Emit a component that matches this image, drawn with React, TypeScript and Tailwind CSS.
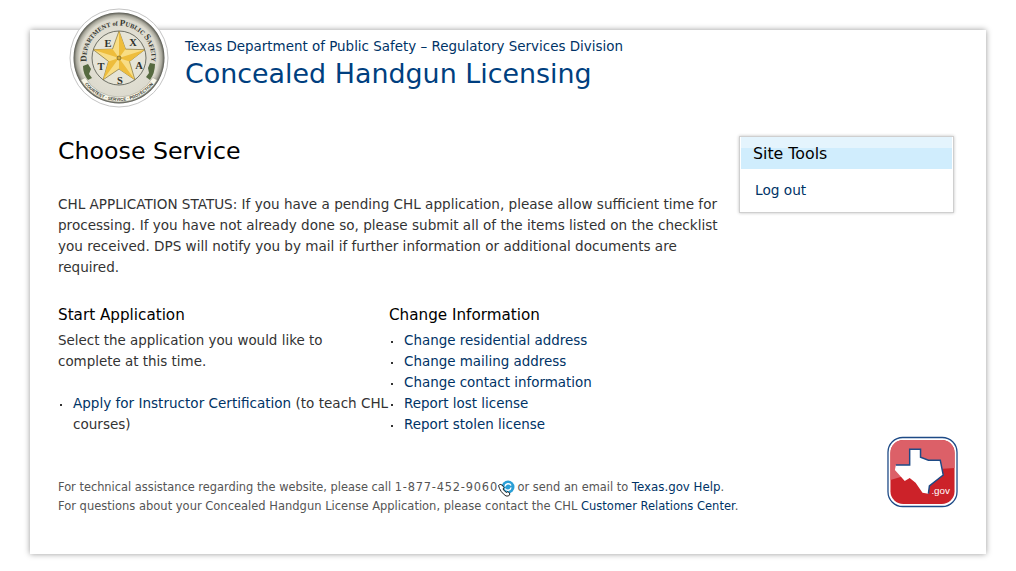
import React from 'react';

const Seal = () => (
  <svg width="100" height="100" viewBox="0 0 100 100" className="absolute left-[39px] top-[-22px]">
    <defs>
      <radialGradient id="rim" cx="50%" cy="50%" r="50%">
        <stop offset="0%" stopColor="#e9e7da" />
        <stop offset="86%" stopColor="#dcdace" />
        <stop offset="94%" stopColor="#a9a89c" />
        <stop offset="100%" stopColor="#55564e" />
      </radialGradient>
    </defs>
    <circle cx="50" cy="50" r="49" fill="#ffffff" stroke="#c4c4c4" strokeWidth="1" />
    <circle cx="50" cy="50" r="45.5" fill="url(#rim)" />
    <circle cx="50" cy="50" r="27" fill="#e6e4d6" stroke="#4f5249" strokeWidth="0.8" />
    <path id="sealTop" d="M18.6 58.4 A32.5 32.5 0 1 1 81.4 58.4" fill="none" />
    <text fontFamily="'Liberation Serif', serif" fontWeight="700" fill="#34362f">
      <textPath href="#sealTop" startOffset="50%" textAnchor="middle">
        <tspan fontSize="9">D</tspan><tspan fontSize="6.4">EPARTMENT</tspan><tspan fontSize="6.4"> of </tspan><tspan fontSize="9">P</tspan><tspan fontSize="6.4">UBLIC </tspan><tspan fontSize="9">S</tspan><tspan fontSize="6.4">AFETY</tspan>
      </textPath>
    </text>
    <path d="M16.2 69.5 A39 39 0 0 0 83.8 69.5 L88.1 72 A44 44 0 0 1 11.9 72 Z" fill="#f8f6e8" stroke="#8e8e82" strokeWidth="0.4" />
    <path id="sealBot" d="M12.8 71.5 A43 43 0 0 0 87.2 71.5" fill="none" />
    <text fontFamily="'Liberation Sans', sans-serif" fontSize="4.3" fontWeight="700" fill="#3a3c34">
      <textPath href="#sealBot" startOffset="50%" textAnchor="middle">COURTESY · SERVICE · PROTECTION</textPath>
    </text>
    <polygon points="50,23 56.5,41.1 75.7,41.7 60.5,53.4 65.9,71.8 50,61 34.1,71.8 39.5,53.4 24.3,41.7 43.5,41.1" fill="#f8dd85" stroke="#6f5f28" strokeWidth="0.6" />
    <path d="M50 50 L50 23 L56.5 41.1 Z M50 50 L75.7 41.7 L60.5 53.4 Z M50 50 L65.9 71.8 L50 61 Z M50 50 L34.1 71.8 L39.5 53.4 Z M50 50 L24.3 41.7 L43.5 41.1 Z" fill="#eebd3c" />
    <circle cx="50" cy="50" r="2" fill="#d4ab3a" stroke="#5d4f20" strokeWidth="0.6" />
    <g fontFamily="'Liberation Serif', serif" fontSize="10.5" fontWeight="700" fill="#2e302a" textAnchor="middle">
      <text x="39" y="39">E</text>
      <text x="64" y="38">X</text>
      <text x="32" y="62">T</text>
      <text x="70" y="61">A</text>
      <text x="51" y="76">S</text>
    </g>
    <path d="M14 58 L19 56 L22 61 L20 66 L23 70 L19 72 Q14 66 14 58 Z" fill="#566a40" />
    <path d="M86 56 L81 55 L79 60 L80 65 L77 69 L81 72 Q86 65 86 56 Z" fill="#566a40" />
  </svg>
);

const TexasGov = () => (
  <svg width="71" height="72" viewBox="0 0 72 72" className="mt-px shrink-0">
    <rect x="1" y="1" width="70" height="70" rx="15" fill="#ffffff" stroke="#1d4a86" strokeWidth="1.3" />
    <rect x="3.5" y="3.5" width="65" height="65" rx="13" fill="#cc2229" />
    <path d="M3.5 44 V16.5 A13 13 0 0 1 16.5 3.5 H55.5 A13 13 0 0 1 68.5 16.5 V32 Q38 33 3.5 44 Z" fill="#dc6068" />
    <path d="M23 13 H34 V21 L42 24 L54 24 L57 39 L43 50 L42 58 L36 57 L29 47 L23 42 L18 45 L8 34 L9 29 H23 Z" fill="#ffffff" />
    <path d="M9 29 H23 V13 H34 V21 L42 24 L54 24 L57 39 L43 50 L42 58" fill="none" stroke="#1d4a86" strokeWidth="1.5" />
    <text x="45" y="58" fontFamily="'Liberation Sans', sans-serif" fontSize="10" fill="#ffffff">.gov</text>
  </svg>
);

const CallIcon = () => (
  <svg width="20" height="18" viewBox="0 0 20 18" className="absolute left-[-1px] top-[-10px]">
    <circle cx="11" cy="7" r="6.5" fill="#2b9fd6" />
    <path d="M8 6.5 A3.2 3.2 0 0 1 14 5.5 M14 7.5 A3.2 3.2 0 0 1 8 8.5" fill="none" stroke="#ffffff" strokeWidth="1.5" />
    <path d="M1.5 5.5 Q3 3.5 5 5 L7 7.5 L6 9 Q7 11 9.5 12.5 L11 11.5 L13 14 Q12 17 9 16 Q3 12 1.5 5.5 Z" fill="#ffffff" stroke="#222222" strokeWidth="1" />
  </svg>
);

const Dot = () => <span className="absolute left-[2px] top-[11px] h-[2px] w-[2px] bg-[#333]" />;

const changeLinks = [
  'Change residential address',
  'Change mailing address',
  'Change contact information',
  'Report lost license',
  'Report stolen license',
];

export default function App() {
  return (
    <div className="h-[571px] bg-white px-[30px] pt-[30px] font-['DejaVu_Sans',sans-serif] text-[13.45px] leading-[21px] text-[#333]">
      <div className="relative h-[524px] w-[956px] bg-white pl-[28px] shadow-[0_0_6px_rgba(0,0,0,0.4)]">
        <Seal />
        <header className="pl-[127px] pt-[8px]">
          <p className="text-[13.45px] leading-[18px] text-[#003366]">Texas Department of Public Safety – Regulatory Services Division</p>
          <h1 className="text-[26.9px] leading-[36px] text-[#003f7f]">Concealed Handgun Licensing</h1>
        </header>
        <div className="flex">
          <main className="w-[665px] pt-[43px]">
            <h2 className="text-[23.7px] leading-[32px] text-black">Choose Service</h2>
            <p className="mt-[27px] text-[13.57px]">
              CHL APPLICATION STATUS: If you have a pending CHL application, please allow sufficient time for processing. If you have not already done so, please submit all of the items listed on the checklist you received. DPS will notify you by mail if further information or additional documents are required.
            </p>
            <div className="mt-[26px] flex">
              <section className="w-[331px]">
                <h3 className="text-[15.2px] leading-[22px] text-black">Start Application</h3>
                <p className="mt-[4px]">Select the application you would like to complete at this time.</p>
                <ul className="mt-[21px]">
                  <li className="relative pl-[15px] text-[13.55px]">
                    <Dot />
                    <a className="text-[#003366]">Apply for Instructor Certification</a> (to teach CHL courses)
                  </li>
                </ul>
              </section>
              <section>
                <h3 className="text-[15.2px] leading-[22px] text-black">Change Information</h3>
                <ul className="mt-[4px]">
                  {changeLinks.map((l) => (
                    <li key={l} className="relative pl-[15px] text-[#003366]">
                      <Dot />
                      {l}
                    </li>
                  ))}
                </ul>
              </section>
            </div>
          </main>
          <aside className="ml-[16px] mt-[44px] h-[77px] w-[215px] border border-[#cfcfcf] bg-white shadow-[0_0_3px_rgba(0,0,0,0.25)]">
            <h4 className="mx-px h-[32px] bg-[linear-gradient(#e4f4fd_11px,#d0edfd_11px)] pl-[12px] pt-[6px] text-[15.8px] leading-[21px] text-black">Site Tools</h4>
            <a className="mt-[11px] block pl-[15px] text-[13.7px] text-[#003366]">Log out</a>
          </aside>
        </div>
        <div className="flex items-start justify-between pr-[28px]">
          <footer className="mt-[43px] text-[11.4px] leading-[19px] text-[#555]">
            <p>
              For technical assistance regarding the website, please call <span className="tracking-[0.8px]">1-877-452-9060</span>
              <span className="relative inline-block h-[1px] w-[16px]"><CallIcon /></span>
              {' '}or send an email to <a className="text-[11.8px] text-[#003366]">Texas.gov Help</a>.
            </p>
            <p className="text-[11.5px]">
              For questions about your Concealed Handgun License Application, please contact the CHL <a className="text-[#003366]">Customer Relations Center</a>.
            </p>
          </footer>
          <TexasGov />
        </div>
      </div>
    </div>
  );
}
